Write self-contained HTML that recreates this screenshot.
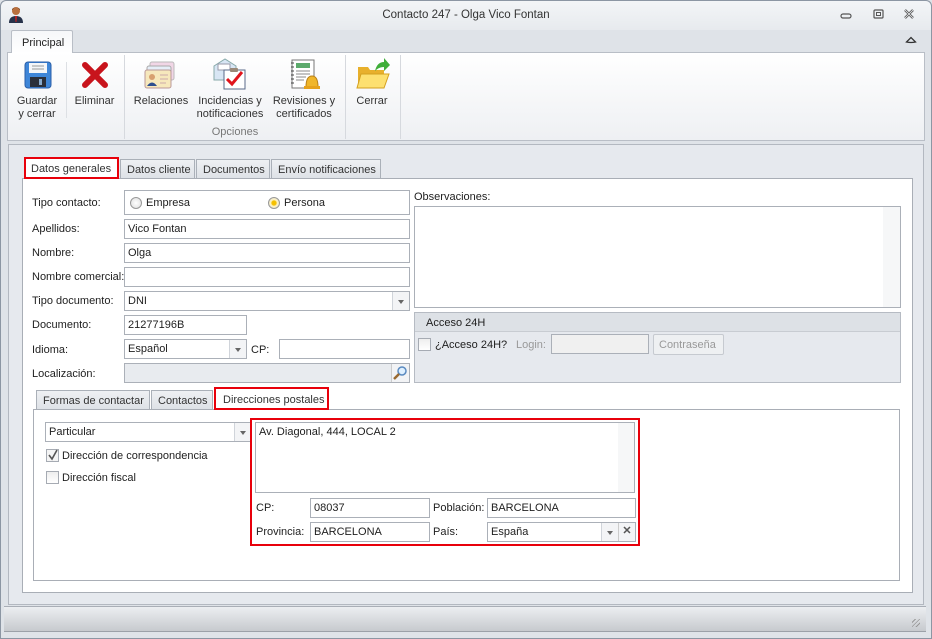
<!DOCTYPE html>
<html><head><meta charset="utf-8"><style>
*{box-sizing:border-box;margin:0;padding:0}
body{width:932px;height:639px;overflow:hidden;background:#dfe3e8;font-family:"Liberation Sans",sans-serif;font-size:11px;color:#1e1e1e;position:relative;white-space:nowrap}
.a{position:absolute}
.in{position:absolute;background:#fff;border:1px solid #abb0b8;height:20px;padding:3px 3px;font-size:11px;line-height:13px;overflow:hidden}
.lbl{position:absolute;font-size:11px}
.dd{position:absolute;right:0;top:0;bottom:0;width:17px;border-left:1px solid #d0d4da;background:#f3f4f6}
.dd:after{content:"";position:absolute;left:5px;top:8px;border:3.5px solid transparent;border-top:4px solid #666}
.tab{position:absolute;height:20px;border:1px solid #aab0b8;border-bottom:none;background:linear-gradient(#eef0f3,#dde1e6);padding:4px 6px;font-size:11px;color:#333}
.red{border:2px solid #e8000b!important}
.rb{position:absolute;text-align:center;font-size:11px;line-height:13px;color:#333}
.sep{position:absolute;top:55px;width:1px;height:84px;background:#d6d9de}
.chk{position:absolute;width:13px;height:13px;border:1px solid #a6abb3;background:linear-gradient(#eee,#fff)}
</style></head><body>
<div class="a" style="left:0;top:0;width:932px;height:639px;border:1px solid #8c96a3;border-radius:6px 6px 0 0;background:#dfe3e8"></div>
<div class="a" style="left:1px;top:1px;width:930px;height:29px;background:linear-gradient(#f3f5f7,#e7eaee);border-radius:6px 6px 0 0"></div>
<svg class="a" style="left:8px;top:6px" width="16" height="18" viewBox="0 0 16 18"><circle cx="8" cy="5" r="4" fill="#b8703e"/><path d="M4 4 Q8 -1 12 4 L12 3 Q8 0 4 3Z" fill="#5a2d12"/><path d="M1 17 Q1 10 8 10 Q15 10 15 17Z" fill="#27324a"/><path d="M7 10 L9 10 L8.5 16 L7.5 16Z" fill="#c02020"/></svg>
<div class="a" style="left:0;width:932px;top:9px;text-align:center;font-size:11.5px;color:#333">Contacto 247 - Olga Vico Fontan</div>
<svg class="a" style="left:838px;top:9px" width="80" height="12"><rect x="3" y="5" width="10" height="4" rx="2" fill="none" stroke="#555" stroke-width="1.2"/><rect x="36" y="1" width="9" height="8" rx="1" fill="none" stroke="#555" stroke-width="1.2"/><rect x="38.5" y="3.5" width="4" height="3" fill="none" stroke="#555"/><path d="M67 1 L75 9 M75 1 L67 9" stroke="#555" stroke-width="2.4"/><path d="M67 1 L75 9 M75 1 L67 9" stroke="#eef0f3" stroke-width="0.8"/></svg>
<svg class="a" style="left:905px;top:35px" width="12" height="10"><path d="M1.5 7 L6 2.5 L10.5 7 Q6 8 1.5 7Z" fill="none" stroke="#333" stroke-width="1.3"/></svg>
<div class="a" style="left:11px;top:30px;width:62px;height:23px;border:1px solid #b9bec6;border-bottom:none;background:linear-gradient(#f6f7f9,#fff);border-radius:2px 2px 0 0;padding:6px 0 0 10px;font-size:11px;color:#222;z-index:2">Principal</div>
<div class="a" style="left:7px;top:52px;width:918px;height:89px;border:1px solid #b9bec6;background:linear-gradient(#fff,#eef0f3)"></div>
<div class="sep" style="left:124px"></div><div class="sep" style="left:345px"></div><div class="sep" style="left:400px"></div>
<div class="a" style="left:66px;top:62px;width:1px;height:56px;background:#dde0e4"></div>
<svg class="a" style="left:24px;top:61px" width="28" height="28" viewBox="0 0 28 28"><rect x="1" y="1" width="26" height="26" rx="3" fill="#3e86d8" stroke="#2a5fa8"/><rect x="5" y="2" width="18" height="10" fill="#f4f6f9"/><path d="M8 5h12M8 8h12" stroke="#999"/><rect x="6" y="16" width="16" height="10" fill="#2a2f3a"/><rect x="15" y="18" width="3" height="6" fill="#8ac"/></svg>
<svg class="a" style="left:82px;top:62px" width="26" height="26"><path d="M3 3 L23 23 M23 3 L3 23" stroke="#c8141c" stroke-width="6" stroke-linecap="round"/></svg>
<svg class="a" style="left:144px;top:60px" width="32" height="30"><rect x="6" y="2" width="24" height="18" rx="2" fill="#f1d6e6" stroke="#bbb"/><rect x="3" y="6" width="24" height="18" rx="2" fill="#e6eef8" stroke="#aaa"/><rect x="1" y="10" width="26" height="18" rx="2" fill="#f6e8bc" stroke="#b99"/><circle cx="8" cy="17" r="3" fill="#d7a070"/><path d="M3 26 Q8 19 13 26Z" fill="#2d4f8f"/><path d="M16 15h8M16 19h8M16 23h6" stroke="#caa"/></svg>
<svg class="a" style="left:212px;top:58px" width="34" height="32"><path d="M2 8 L13 1 L24 8 L24 22 L2 22Z" fill="#d8e6f4" stroke="#8aa"/><rect x="6" y="6" width="12" height="6" fill="#fff" stroke="#99a"/><rect x="12" y="12" width="21" height="19" fill="#fff" stroke="#5a6a8a"/><rect x="18" y="10" width="8" height="4" rx="1" fill="#987"/><path d="M15 21 L20 26 L30 14" fill="none" stroke="#e0141c" stroke-width="3"/></svg>
<svg class="a" style="left:288px;top:59px" width="34" height="32"><rect x="4" y="1" width="22" height="28" fill="#fff" stroke="#777"/><rect x="8" y="4" width="14" height="5" fill="#5caa6c"/><path d="M8 12h14M8 15h14M8 18h10M8 21h8" stroke="#888"/><path d="M3 4h3M3 8h3M3 12h3M3 16h3M3 20h3M3 24h3" stroke="#444"/><path d="M18 28 Q18 17 24 17 Q30 17 30 28Z" fill="#f0b62a" stroke="#b8801a"/><rect x="16" y="27" width="16" height="3" fill="#e6a21c"/></svg>
<svg class="a" style="left:356px;top:57px" width="34" height="34"><path d="M2 10 L12 10 L14 13 L28 13 L28 30 L2 30Z" fill="#e8b02c"/><path d="M5 17 L33 17 L28 31 L1 31Z" fill="#fde070" stroke="#d4a020"/><path d="M19 14 Q21 5 28 5 L28 1 L34 8 L28 14 L28 10 Q23 10 19 14Z" fill="#3fae3a"/></svg>
<div class="rb" style="left:12px;top:95px;width:50px">Guardar<br>y cerrar</div>
<div class="rb" style="left:72px;top:95px;width:45px">Eliminar</div>
<div class="rb" style="left:130px;top:95px;width:62px">Relaciones</div>
<div class="rb" style="left:193px;top:95px;width:74px">Incidencias y<br>notificaciones</div>
<div class="rb" style="left:268px;top:95px;width:72px">Revisiones y<br>certificados</div>
<div class="rb" style="left:350px;top:95px;width:44px">Cerrar</div>
<div class="rb" style="left:205px;top:126px;width:60px;color:#777">Opciones</div>
<div class="a" style="left:8px;top:144px;width:916px;height:461px;border:1px solid #b3b8c0;background:#e6e9ee"></div>
<div class="tab red" style="left:24px;top:157px;width:95px;height:22px;background:#fff;z-index:3;padding:4px 5px">Datos generales</div>
<div class="tab" style="left:120px;top:159px;width:75px">Datos cliente</div>
<div class="tab" style="left:196px;top:159px;width:74px">Documentos</div>
<div class="tab" style="left:271px;top:159px;width:110px">Envío notificaciones</div>
<div class="a" style="left:22px;top:178px;width:891px;height:415px;border:1px solid #a9aeb6;background:#fff"></div>
<div class="lbl" style="left:32px;top:197px">Tipo contacto:</div>
<div class="in" style="left:124px;top:190px;width:286px;height:25px"></div>
<div class="a" style="left:130px;top:197px;width:12px;height:12px;border-radius:50%;border:1px solid #999;background:radial-gradient(#fff,#ddd)"></div>
<div class="lbl" style="left:146px;top:197px">Empresa</div>
<div class="a" style="left:268px;top:197px;width:12px;height:12px;border-radius:50%;border:1px solid #999;background:radial-gradient(#f5c000 30%,#fff3c0 45%,#ddd)"></div>
<div class="lbl" style="left:284px;top:197px">Persona</div>
<div class="lbl" style="left:32px;top:223px">Apellidos:</div><div class="in" style="left:124px;top:219px;width:286px">Vico Fontan</div>
<div class="lbl" style="left:32px;top:247px">Nombre:</div><div class="in" style="left:124px;top:243px;width:286px">Olga</div>
<div class="lbl" style="left:32px;top:271px">Nombre comercial:</div><div class="in" style="left:124px;top:267px;width:286px"></div>
<div class="lbl" style="left:32px;top:295px">Tipo documento:</div><div class="in" style="left:124px;top:291px;width:286px">DNI<div class="dd"></div></div>
<div class="lbl" style="left:32px;top:319px">Documento:</div><div class="in" style="left:124px;top:315px;width:123px">21277196B</div>
<div class="lbl" style="left:32px;top:344px">Idioma:</div><div class="in" style="left:124px;top:339px;width:123px">Español<div class="dd"></div></div>
<div class="lbl" style="left:251px;top:344px">CP:</div><div class="in" style="left:279px;top:339px;width:131px"></div>
<div class="lbl" style="left:32px;top:368px">Localización:</div><div class="in" style="left:124px;top:363px;width:286px;background:#e8ebef"><div style="position:absolute;right:0;top:0;bottom:0;width:18px;background:#f2f3f5;border-left:1px solid #ccc"></div><svg style="position:absolute;right:2px;top:2px" width="14" height="14"><circle cx="9" cy="5" r="4" fill="#dff0ff" stroke="#5a8ac0" stroke-width="1.5"/><path d="M6 8 L1 13" stroke="#9a6a30" stroke-width="2.5"/></svg></div>
<div class="lbl" style="left:414px;top:191px">Observaciones:</div>
<div class="in" style="left:414px;top:206px;width:487px;height:102px"><div style="position:absolute;right:0;top:0;bottom:0;width:17px;background:#f6f7f8"></div></div>
<div class="a" style="left:414px;top:312px;width:487px;height:71px;border:1px solid #b6bbc3;background:#e6e9ee"></div>
<div class="a" style="left:415px;top:313px;width:485px;height:19px;background:#dde1e6;border-bottom:1px solid #c8ccd2"></div>
<div class="lbl" style="left:426px;top:317px">Acceso 24H</div>
<div class="chk" style="left:418px;top:338px"></div>
<div class="lbl" style="left:435px;top:339px">¿Acceso 24H?</div>
<div class="lbl" style="left:516px;top:339px;color:#999">Login:</div>
<div class="in" style="left:551px;top:334px;width:98px;background:#f0f0f0"></div>
<div class="a" style="left:653px;top:334px;width:71px;height:21px;border:1px solid #c6cad0;border-radius:2px;background:#eef0f2;color:#999;padding:4px 5px">Contraseña</div>
<div class="tab" style="left:36px;top:390px;width:114px">Formas de contactar</div>
<div class="tab" style="left:151px;top:390px;width:62px">Contactos</div>
<div class="tab red" style="left:214px;top:387px;width:115px;height:23px;background:#fff;z-index:3;padding:5px 7px">Direcciones postales</div>
<div class="a" style="left:33px;top:409px;width:867px;height:172px;border:1px solid #a9aeb6;background:#fff"></div>
<div class="in" style="left:45px;top:422px;width:207px">Particular<div class="dd"></div></div>
<div class="chk" style="left:46px;top:449px;background:#f4f4f4"></div>
<svg class="a" style="left:47px;top:449px" width="12" height="12"><path d="M2 6 L5 10 L10 1" fill="none" stroke="#555" stroke-width="1.6"/></svg>
<div class="lbl" style="left:62px;top:450px">Dirección de correspondencia</div>
<div class="chk" style="left:46px;top:471px"></div>
<div class="lbl" style="left:62px;top:472px">Dirección fiscal</div>
<div class="a red" style="left:250px;top:418px;width:390px;height:128px"></div>
<div class="in" style="left:255px;top:422px;width:380px;height:71px">Av. Diagonal, 444, LOCAL 2<div style="position:absolute;right:0;top:0;bottom:0;width:16px;background:#f6f7f8"></div></div>
<div class="lbl" style="left:256px;top:502px">CP:</div><div class="in" style="left:310px;top:498px;width:120px">08037</div>
<div class="lbl" style="left:433px;top:502px">Población:</div><div class="in" style="left:487px;top:498px;width:149px">BARCELONA</div>
<div class="lbl" style="left:256px;top:526px">Provincia:</div><div class="in" style="left:310px;top:522px;width:120px">BARCELONA</div>
<div class="lbl" style="left:433px;top:526px">País:</div><div class="in" style="left:487px;top:522px;width:149px">España<div class="dd" style="right:17px"></div><div style="position:absolute;right:0;top:0;bottom:0;width:17px;background:#f3f4f6;border-left:1px solid #ccc;text-align:center;font-weight:bold;color:#555;line-height:16px">✕</div></div>
<div class="a" style="left:4px;top:606px;width:922px;height:26px;border-top:1px solid #a9aeb6;border-bottom:1px solid #9ca1a8;background:linear-gradient(#eceef1,#c7cace)"></div>
<div class="a" style="left:912px;top:619px;width:8px;height:8px;background:repeating-linear-gradient(135deg,transparent 0 2px,#999 2px 3px)"></div>
</body></html>
